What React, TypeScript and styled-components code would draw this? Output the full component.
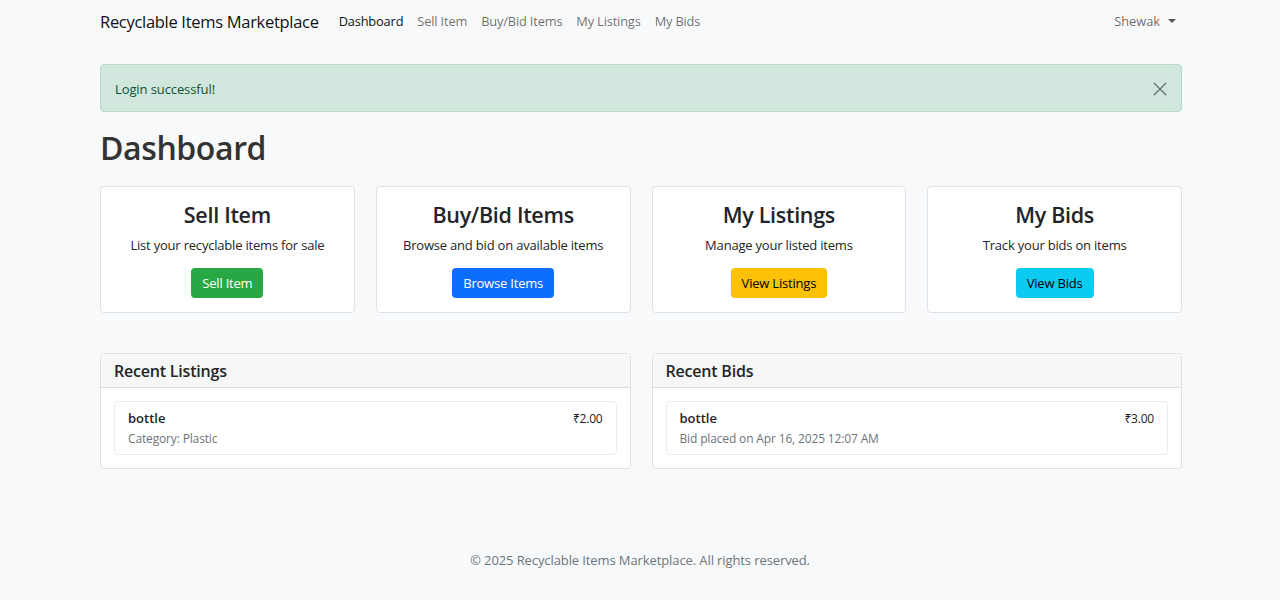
import React from 'react';
import styled, { createGlobalStyle } from 'styled-components';

const GlobalStyle = createGlobalStyle`
  html, body {
    margin: 0;
    padding: 0;
    background: #f8f9fa;
    font-family: "Open Sans", "Noto Sans", sans-serif;
    color: #212529;
  }
  * { box-sizing: border-box; }
`;

type Tone = 'success' | 'primary' | 'warning' | 'info';

const tones: Record<Tone, { bg: string; fg: string }> = {
  success: { bg: '#28a745', fg: '#fff' },
  primary: { bg: '#0d6efd', fg: '#fff' },
  warning: { bg: '#ffc107', fg: '#000' },
  info: { bg: '#0dcaf0', fg: '#000' },
};

const actions: { title: string; text: string; button: string; tone: Tone }[] = [
  { title: 'Sell Item', text: 'List your recyclable items for sale', button: 'Sell Item', tone: 'success' },
  { title: 'Buy/Bid Items', text: 'Browse and bid on available items', button: 'Browse Items', tone: 'primary' },
  { title: 'My Listings', text: 'Manage your listed items', button: 'View Listings', tone: 'warning' },
  { title: 'My Bids', text: 'Track your bids on items', button: 'View Bids', tone: 'info' },
];

const App: React.FC = () => (
  <Page>
    <GlobalStyle />
    <Navbar>
      <Container>
        <NavRow>
          <Brand>Recyclable Items Marketplace</Brand>
          <NavLinks>
            <NavLink active>Dashboard</NavLink>
            <NavLink>Sell Item</NavLink>
            <NavLink>Buy/Bid Items</NavLink>
            <NavLink>My Listings</NavLink>
            <NavLink>My Bids</NavLink>
          </NavLinks>
          <UserMenu>
            Shewak <Caret />
          </UserMenu>
        </NavRow>
      </Container>
    </Navbar>

    <Main>
      <Container>
        <Alert>
          <span>Login successful!</span>
          <CloseButton aria-label="Close">
            <svg width="14" height="14" viewBox="0 0 16 16">
              <path d="M1 1 L15 15 M15 1 L1 15" stroke="#5c6560" strokeWidth="1.6" fill="none" />
            </svg>
          </CloseButton>
        </Alert>

        <Title>Dashboard</Title>

        <ActionGrid>
          {actions.map(a => (
            <ActionCard key={a.title}>
              <ActionTitle>{a.title}</ActionTitle>
              <ActionText>{a.text}</ActionText>
              <Button tone={a.tone}>{a.button}</Button>
            </ActionCard>
          ))}
        </ActionGrid>

        <RecentGrid>
          <Panel>
            <PanelHeader>Recent Listings</PanelHeader>
            <PanelBody>
              <ListItem>
                <ItemTop>
                  <ItemName>bottle</ItemName>
                  <Price>₹2.00</Price>
                </ItemTop>
                <ItemMeta>Category: Plastic</ItemMeta>
              </ListItem>
            </PanelBody>
          </Panel>
          <Panel>
            <PanelHeader>Recent Bids</PanelHeader>
            <PanelBody>
              <ListItem>
                <ItemTop>
                  <ItemName>bottle</ItemName>
                  <Price>₹3.00</Price>
                </ItemTop>
                <ItemMeta>Bid placed on Apr 16, 2025 12:07 AM</ItemMeta>
              </ListItem>
            </PanelBody>
          </Panel>
        </RecentGrid>
      </Container>
    </Main>

    <Footer>© 2025 Recyclable Items Marketplace. All rights reserved.</Footer>
  </Page>
);

const Page = styled.div`
  min-height: 600px;
  display: flex;
  flex-direction: column;
`;

const Container = styled.div`
  width: 1082px;
  margin-left: calc(50% - 540px);
`;

const Navbar = styled.nav`
  height: 42px;
`;

const NavRow = styled.div`
  height: 42px;
  display: flex;
  align-items: center;
`;

const Brand = styled.div`
  font-size: 16.5px;
  color: #111;
  margin-right: 20px;
  letter-spacing: -0.3px;
`;

const NavLinks = styled.div`
  display: flex;
  gap: 14px;
  flex: 1;
`;

const NavLink = styled.a<{ active?: boolean }>`
  font-size: 12.8px;
  letter-spacing: -0.15px;
  color: ${p => (p.active ? '#111' : 'rgba(0,0,0,0.58)')};
  cursor: pointer;
`;

const UserMenu = styled.div`
  font-size: 12.8px;
  color: rgba(0, 0, 0, 0.6);
  display: flex;
  align-items: center;
  gap: 6px;
  margin-right: 6px;
`;

const Caret = styled.span`
  width: 0;
  height: 0;
  border-left: 4px solid transparent;
  border-right: 4px solid transparent;
  border-top: 4px solid rgba(0, 0, 0, 0.65);
  margin-left: 2px;
`;

const Main = styled.main`
  padding-top: 22px;
  flex: 1;
`;

const Alert = styled.div`
  height: 48px;
  background: #d1e7dd;
  border: 1px solid #badbcc;
  border-radius: 4px;
  color: #0f5132;
  font-size: 13px;
  letter-spacing: -0.1px;
  padding: 1px 14px 0;
  display: flex;
  align-items: center;
  justify-content: space-between;
`;

const CloseButton = styled.button`
  background: none;
  border: 0;
  padding: 0;
  margin-right: 0;
  display: flex;
  cursor: pointer;
`;

const Title = styled.h1`
  font-size: 32px;
  font-weight: 600;
  letter-spacing: -0.4px;
  color: #333;
  margin: 16px 0 18px;
  line-height: 40px;
`;

const ActionGrid = styled.div`
  display: grid;
  grid-template-columns: repeat(4, 1fr);
  gap: 21px;
`;

const ActionCard = styled.div`
  background: #fff;
  border: 1px solid #dee2e6;
  border-radius: 4px;
  height: 127px;
  padding-top: 14px;
  display: flex;
  flex-direction: column;
  align-items: center;
`;

const ActionTitle = styled.h5`
  font-size: 21.5px;
  font-weight: 600;
  letter-spacing: -0.3px;
  margin: 0;
  line-height: 28px;
  color: #212529;
`;

const ActionText = styled.p`
  font-size: 13px;
  letter-spacing: -0.2px;
  margin: 7px 0 14px;
  line-height: 18px;
  color: #212529;
`;

const Button = styled.button<{ tone: Tone }>`
  background: ${p => tones[p.tone].bg};
  color: ${p => tones[p.tone].fg};
  border: 0;
  border-radius: 4px;
  height: 30px;
  padding: 0 11px;
  font-family: inherit;
  font-size: 13px;
  letter-spacing: -0.2px;
  cursor: pointer;
`;

const RecentGrid = styled.div`
  display: grid;
  grid-template-columns: 1fr 1fr;
  gap: 21px;
  margin-top: 40px;
`;

const Panel = styled.div`
  background: #fff;
  border: 1px solid #dee2e6;
  border-radius: 4px;
  overflow: hidden;
`;

const PanelHeader = styled.div`
  background: #f7f7f7;
  border-bottom: 1px solid #dcdcdc;
  height: 34px;
  padding: 0 13px;
  display: flex;
  align-items: center;
  font-size: 16px;
  font-weight: 600;
  letter-spacing: -0.2px;
  color: #212529;
`;

const PanelBody = styled.div`
  padding: 13px;
`;

const ListItem = styled.div`
  border: 1px solid #e9ecef;
  border-radius: 4px;
  padding: 7px 13px 7px;
`;

const ItemTop = styled.div`
  display: flex;
  justify-content: space-between;
  align-items: center;
`;

const ItemName = styled.span`
  font-size: 13px;
  font-weight: 600;
  color: #212529;
  line-height: 18px;
`;

const Price = styled.span`
  font-size: 12px;
  letter-spacing: -0.2px;
  color: #212529;
`;

const ItemMeta = styled.div`
  font-size: 12px;
  letter-spacing: -0.15px;
  color: #6c757d;
  margin-top: 3px;
  line-height: 17px;
`;

const Footer = styled.footer`
  text-align: center;
  font-size: 13px;
  letter-spacing: -0.1px;
  color: #6c757d;
  height: 49px;
`;

export default App;
